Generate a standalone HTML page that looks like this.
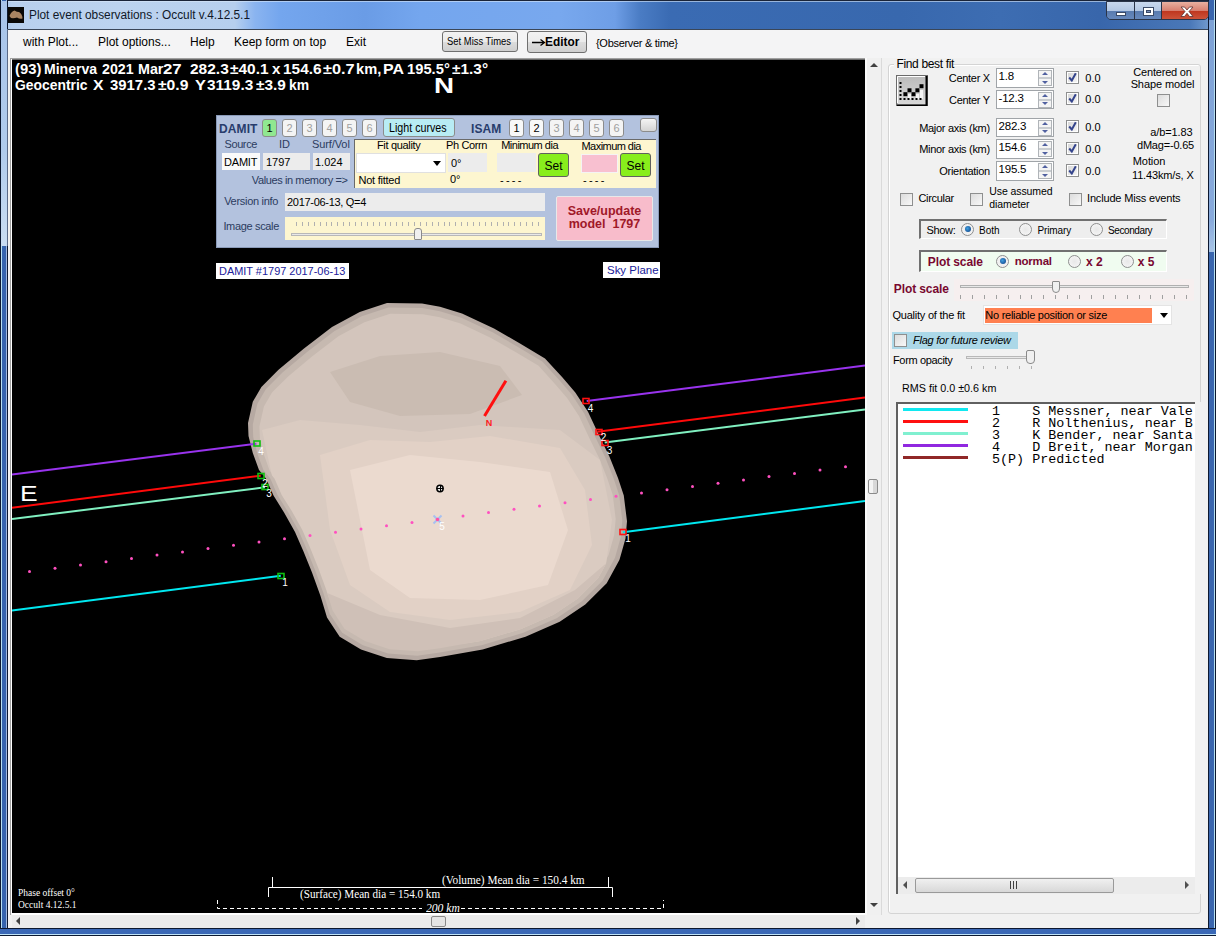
<!DOCTYPE html>
<html><head><meta charset="utf-8"><style>
*{margin:0;padding:0;box-sizing:border-box}
html,body{width:1216px;height:936px;overflow:hidden;background:#f0f0f0;font-family:"Liberation Sans",sans-serif;font-size:11px;color:#000}
.a{position:absolute}
.t{position:absolute;white-space:pre;line-height:1}
svg{position:absolute}

</style></head><body>
<div class="a" style="left:0;top:0;width:1216px;height:30px;background:linear-gradient(90deg,#9fbde6 0px,#b8d0ee 12px,#bcd3ef 120px,#b6cfee 235px,#8ab4f0 255px,#74a6ee 280px,#6a9ce6 365px,#74a6ee 420px,#78a8ee 560px,#6e9ee6 615px,#4a7cc4 640px,#3a6bb3 670px,#3868ae 900px,#3d6db2 1000px,#3866ab 1100px,#4a78b8 1190px,#7fa6d6 1216px)"></div>
<div class="a" style="left:0px;top:0px;width:1216px;height:1px;background:#1a2438"></div>
<div class="a" style="left:8px;top:1px;width:1200px;height:1px;background:#d8e8f8;opacity:.6"></div>
<div class="a" style="left:0;top:0;width:8px;height:936px;background:linear-gradient(90deg,#0c1830 0,#0c1830 1px,#b8e0f0 1px,#b8e0f0 2px,#3664ae 2px,#3664ae 6px,#9fb8e0 6px,#9fb8e0 7px,#0c1830 7px)"></div>
<div class="a" style="left:1px;top:1px;width:6px;height:245px;background:linear-gradient(180deg,#a8c4ea 0,#b0cbec 150px,#c8dcf2 240px)"></div>
<div class="a" style="left:7px;top:29px;width:1px;height:217px;background:#5a6a88"></div>
<div class="a" style="left:1208px;top:0;width:8px;height:936px;background:linear-gradient(90deg,#0c1830 0,#0c1830 1px,#3a66ae 1px,#3a66ae 6px,#b8e0f0 6px,#b8e0f0 7px,#0c1830 7px)"></div>
<div class="a" style="left:1209px;top:20px;width:5px;height:232px;background:linear-gradient(180deg,#7ea2d6 0,#88aadc 200px,#a8c4e6 232px)"></div>
<div class="a" style="left:0;top:928px;width:1216px;height:8px;background:linear-gradient(180deg,#0c1830 0,#0c1830 1px,#3a68b6 1px,#3a68b6 6px,#c0e4f8 6px,#c0e4f8 7px,#0c1830 7px)"></div>
<svg style="left:8px;top:7px" width="16" height="16"><rect width="16" height="16" fill="#0a0806"/><path d="M1.5,9 Q3,4.5 6.5,3.5 Q9,5 11,5 Q14.5,7 14.5,11.5 Q12,12.5 9,10.5 Q6,11.5 3,11 Z" fill="#a88462"/></svg>
<div class="t" style="left:28.61px;top:9.14px;font-size:12px;font-family:'Liberation Sans',sans-serif;transform:scaleX(0.9870);transform-origin:0 0;color:#101828">Plot event observations : Occult v.4.12.5.1</div>
<div class="a" style="left:1106px;top:1px;width:103px;height:19px;border:1px solid #2a3448;border-radius:0 0 5px 5px;overflow:hidden"><div class="a" style="left:0;top:0;width:28px;height:19px;background:linear-gradient(180deg,#c8d8ee 0,#b4c8e4 45%,#5a7cb0 50%,#6a8cc0 100%);border-right:1px solid #2a3448"></div><div class="a" style="left:28px;top:0;width:27px;height:19px;background:linear-gradient(180deg,#c8d8ee 0,#b4c8e4 45%,#5a7cb0 50%,#6a8cc0 100%);border-right:1px solid #2a3448"></div><div class="a" style="left:55px;top:0;width:47px;height:19px;background:linear-gradient(180deg,#e8b0a0 0,#d88070 45%,#c03820 50%,#d05a40 100%)"></div><div class="a" style="left:9px;top:10px;width:10px;height:4px;background:#fff;border:1px solid #3a4a68"></div><div class="a" style="left:36px;top:5px;width:11px;height:9px;border:1px solid #3a4a68;background:#fff"><div class="a" style="left:2px;top:2px;width:5px;height:3px;background:#7a90b8;border:1px solid #3a4a68"></div></div><svg style="left:73px;top:4px" width="14" height="12"><path d="M1,1 L4.5,1 L7,4 L9.5,1 L13,1 L9,5.5 L13,10.5 L9.5,10.5 L7,7.3 L4.5,10.5 L1,10.5 L5,5.5 Z" fill="#fff" stroke="#5a3030" stroke-width="0.8"/></svg></div>
<div class="a" style="left:8px;top:29px;width:1200px;height:899px;background:#f1f1f1"></div>
<div class="a" style="left:8px;top:29px;width:1200px;height:1px;background:#3a4658"></div>
<div class="a" style="left:8px;top:30px;width:1200px;height:28px;background:#f4f4f5"></div>
<div class="t" style="left:23px;top:35.84px;font-size:12px;font-family:'Liberation Sans',sans-serif;color:#000">with Plot...</div>
<div class="t" style="left:98px;top:35.84px;font-size:12px;font-family:'Liberation Sans',sans-serif;color:#000">Plot options...</div>
<div class="t" style="left:190px;top:35.84px;font-size:12px;font-family:'Liberation Sans',sans-serif;color:#000">Help</div>
<div class="t" style="left:234px;top:35.84px;font-size:12px;font-family:'Liberation Sans',sans-serif;color:#000">Keep form on top</div>
<div class="t" style="left:346px;top:35.84px;font-size:12px;font-family:'Liberation Sans',sans-serif;color:#000">Exit</div>
<div class="a" style="left:442px;top:31px;width:76px;height:21px;border:1px solid #707070;border-radius:3px;background:linear-gradient(180deg,#f2f2f2 0,#ebebeb 50%,#dddddd 51%,#cfcfcf 100%)"></div>
<div class="t" style="left:447.32px;top:37.03px;font-size:10px;font-family:'Liberation Sans',sans-serif;transform:scaleX(0.9434);transform-origin:0 0;color:#000">Set Miss Times</div>
<div class="a" style="left:527px;top:31px;width:60px;height:22px;border:1px solid #707070;border-radius:3px;background:linear-gradient(180deg,#f2f2f2 0,#ebebeb 50%,#dddddd 51%,#cfcfcf 100%)"></div>
<svg style="left:532px;top:38px" width="14" height="9"><path d="M0,4.5 L12,4.5 M8.5,1.5 L12.5,4.5 L8.5,7.5" stroke="#000" stroke-width="1.3" fill="none"/></svg>
<div class="t" style="left:545.24px;top:36.42px;font-size:12.5px;font-family:'Liberation Sans',sans-serif;font-weight:bold;transform:scaleX(0.9487);transform-origin:0 0;color:#000">Editor</div>
<div class="t" style="left:596px;top:37.69px;font-size:11px;font-family:'Liberation Sans',sans-serif;letter-spacing:-0.3px;color:#000">{Observer &amp; time}</div>
<div class="a" style="left:10px;top:58px;width:857px;height:1px;background:#a0a0a0"></div>
<div class="a" style="left:10px;top:59px;width:857px;height:1px;background:#696969"></div>
<div class="a" style="left:10px;top:58px;width:1px;height:857px;background:#a0a0a0"></div>
<div class="a" style="left:11px;top:59px;width:1px;height:855px;background:#fff"></div>
<div class="a" style="left:12px;top:60px;width:853px;height:853px;background:#000"></div>
<div class="a" style="left:12px;top:913px;width:853px;height:2px;background:#fff"></div>
<svg style="left:12px;top:60px" width="853" height="853" viewBox="0 0 853 853"><polygon points="375.0,243.0 410.0,243.5 428.0,246.8 450.0,253.5 482.0,268.5 508.0,283.4 533.0,298.4 550.5,317.6 563.3,332.6 576.0,351.8 587.0,375.3 597.5,396.7 606.0,418.0 611.8,435.6 615.0,461.3 613.5,478.4 607.5,499.7 594.7,523.2 573.3,544.6 547.7,561.7 513.5,576.7 470.7,589.5 428.0,597.0 404.7,600.2 374.8,598.0 349.0,589.5 327.7,576.7 315.0,557.4 308.5,536.0 300.0,512.6 291.4,491.2 283.0,472.0 272.2,452.7 261.5,435.6 254.0,418.5 247.0,410.0 240.8,393.0 236.5,376.0 236.0,363.0 240.8,341.8 249.4,326.9 266.5,309.8 292.0,288.4 320.0,267.0 347.7,252.0" fill="#b6a9a2"/><polygon points="376.3,247.5 410.4,248.0 427.9,251.2 449.4,257.7 480.6,272.3 506.0,286.9 530.3,301.5 547.4,320.2 559.9,334.8 572.2,353.6 583.0,376.5 593.2,397.3 601.5,418.1 607.2,435.3 610.3,460.3 608.8,477.0 603.0,497.8 590.5,520.7 569.6,541.5 544.7,558.2 511.3,572.8 469.6,585.3 427.9,592.6 405.2,595.7 376.1,593.6 350.9,585.3 330.2,572.8 317.8,554.0 311.4,533.1 303.1,510.3 294.8,489.5 286.6,470.8 276.0,451.9 265.6,435.3 258.3,418.6 251.5,410.3 245.4,393.7 241.2,377.1 240.8,364.5 245.4,343.8 253.8,329.3 270.5,312.6 295.4,291.7 322.6,270.9 349.7,256.2" fill="#c6b9b0"/><polygon points="378.1,253.7 411.0,254.2 427.9,257.3 448.6,263.6 478.6,277.7 503.1,291.7 526.6,305.8 543.0,323.9 555.1,338.0 567.0,356.0 577.3,378.1 587.2,398.2 595.2,418.2 600.7,434.8 603.7,458.9 602.2,475.0 596.6,495.0 584.6,517.1 564.5,537.2 540.4,553.3 508.2,567.4 468.0,579.5 427.9,586.5 406.0,589.5 377.9,587.4 353.6,579.5 333.6,567.4 321.7,549.3 315.6,529.2 307.6,507.2 299.5,487.0 291.6,469.0 281.4,450.9 271.4,434.8 264.3,418.7 257.7,410.7 251.9,394.7 247.9,378.8 247.4,366.5 251.9,346.6 260.0,332.6 276.1,316.5 300.0,296.4 326.4,276.3 352.4,262.2" fill="#d3c5bc"/><defs><clipPath id="ac"><polygon points="377.6,252.0 410.8,252.4 427.9,255.6 448.8,261.9 479.2,276.2 503.9,290.3 527.6,304.6 544.3,322.8 556.4,337.1 568.5,355.3 579.0,377.6 588.9,398.0 597.0,418.2 602.5,434.9 605.5,459.3 604.1,475.6 598.4,495.8 586.3,518.1 565.9,538.5 541.6,554.7 509.1,569.0 468.5,581.1 427.9,588.2 405.8,591.3 377.4,589.2 352.9,581.1 332.6,569.0 320.6,550.6 314.4,530.3 306.3,508.1 298.1,487.7 290.1,469.5 279.9,451.2 269.7,434.9 262.6,418.7 256.0,410.6 250.1,394.4 246.0,378.3 245.5,365.9 250.1,345.8 258.2,331.7 274.5,315.4 298.7,295.1 325.3,274.8 351.6,260.5"/></clipPath></defs><g clip-path="url(#ac)"><polygon points="250.0,370.0 288.0,360.0 348.0,365.0 408.0,372.0 468.0,365.0 548.0,370.0 588.0,400.0 600.0,460.0 592.0,520.0 558.0,555.0 488.0,580.0 408.0,588.0 348.0,575.0 318.0,540.0 288.0,480.0 263.0,430.0" fill="#dacbc1"/><polygon points="308.0,530.0 368.0,555.0 438.0,568.0 508.0,558.0 563.0,530.0 598.0,500.0 628.0,540.0 548.0,620.0 408.0,640.0 288.0,590.0" fill="#cfc0b7"/><polygon points="318.0,312.0 368.0,296.0 428.0,292.0 488.0,306.0 510.0,335.0 458.0,354.0 388.0,356.0 338.0,342.0" fill="#cabcb2"/><polygon points="308.0,395.0 358.0,380.0 418.0,382.0 478.0,376.0 548.0,388.0 573.0,430.0 580.0,485.0 558.0,530.0 508.0,552.0 438.0,560.0 378.0,552.0 338.0,525.0 318.0,470.0" fill="#e2d1c6"/><polygon points="338.0,410.0 398.0,395.0 468.0,402.0 538.0,412.0 556.0,470.0 536.0,525.0 468.0,540.0 398.0,538.0 358.0,510.0" fill="#ebdacf"/></g><line x1="0" y1="414.5" x2="244.39999999999998" y2="383.7" stroke="#9933ee" stroke-width="2"/><line x1="574.7" y1="341" x2="853" y2="305.5" stroke="#9933ee" stroke-width="2"/><line x1="0" y1="447.8" x2="248.7" y2="415.7" stroke="#ff0a0a" stroke-width="2"/><line x1="585.4" y1="371.8" x2="853" y2="337.6" stroke="#ff0a0a" stroke-width="2"/><line x1="0" y1="459" x2="253" y2="427.3" stroke="#80f0c0" stroke-width="2"/><line x1="592.7" y1="382.5" x2="853" y2="349.5" stroke="#80f0c0" stroke-width="2"/><line x1="0" y1="550.4" x2="268.8" y2="515.7" stroke="#00e8f0" stroke-width="2"/><line x1="611" y1="472.20000000000005" x2="853" y2="441" stroke="#00e8f0" stroke-width="2"/><circle cx="17.5" cy="511.5" r="1.5" fill="#ff50c0"/><circle cx="43.0" cy="508.2" r="1.5" fill="#ff50c0"/><circle cx="68.5" cy="505.0" r="1.5" fill="#ff50c0"/><circle cx="94.0" cy="501.7" r="1.5" fill="#ff50c0"/><circle cx="119.5" cy="498.4" r="1.5" fill="#ff50c0"/><circle cx="145.0" cy="495.1" r="1.5" fill="#ff50c0"/><circle cx="170.5" cy="491.9" r="1.5" fill="#ff50c0"/><circle cx="196.0" cy="488.6" r="1.5" fill="#ff50c0"/><circle cx="221.5" cy="485.3" r="1.5" fill="#ff50c0"/><circle cx="247.0" cy="482.1" r="1.5" fill="#ff50c0"/><circle cx="272.5" cy="478.8" r="1.5" fill="#ff50c0"/><circle cx="298.0" cy="475.5" r="1.5" fill="#ff50c0"/><circle cx="323.5" cy="472.2" r="1.5" fill="#ff50c0"/><circle cx="349.0" cy="469.0" r="1.5" fill="#ff50c0"/><circle cx="374.5" cy="465.7" r="1.5" fill="#ff50c0"/><circle cx="400.0" cy="462.4" r="1.5" fill="#ff50c0"/><circle cx="425.5" cy="459.2" r="1.5" fill="#ff50c0"/><circle cx="451.0" cy="455.9" r="1.5" fill="#ff50c0"/><circle cx="476.5" cy="452.6" r="1.5" fill="#ff50c0"/><circle cx="502.0" cy="449.3" r="1.5" fill="#ff50c0"/><circle cx="527.5" cy="446.1" r="1.5" fill="#ff50c0"/><circle cx="553.0" cy="442.8" r="1.5" fill="#ff50c0"/><circle cx="578.5" cy="439.5" r="1.5" fill="#ff50c0"/><circle cx="604.0" cy="436.3" r="1.5" fill="#ff50c0"/><circle cx="629.5" cy="433.0" r="1.5" fill="#ff50c0"/><circle cx="655.0" cy="429.7" r="1.5" fill="#ff50c0"/><circle cx="680.5" cy="426.4" r="1.5" fill="#ff50c0"/><circle cx="706.0" cy="423.2" r="1.5" fill="#ff50c0"/><circle cx="731.5" cy="419.9" r="1.5" fill="#ff50c0"/><circle cx="757.0" cy="416.6" r="1.5" fill="#ff50c0"/><circle cx="782.5" cy="413.4" r="1.5" fill="#ff50c0"/><circle cx="808.0" cy="410.1" r="1.5" fill="#ff50c0"/><circle cx="833.5" cy="406.8" r="1.5" fill="#ff50c0"/><rect x="242" y="381.0" width="6" height="5" fill="none" stroke="#10c010" stroke-width="1.6"/><rect x="246" y="413.5" width="6" height="5" fill="none" stroke="#10c010" stroke-width="1.6"/><rect x="250" y="424.5" width="6" height="5" fill="none" stroke="#10c010" stroke-width="1.6"/><rect x="266" y="513.5" width="6" height="5" fill="none" stroke="#10c010" stroke-width="1.6"/><rect x="571" y="338.5" width="6" height="5" fill="none" stroke="#ff1010" stroke-width="1.6"/><rect x="584" y="369.5" width="6" height="5" fill="none" stroke="#ff1010" stroke-width="1.6"/><rect x="590" y="380.5" width="6" height="5" fill="none" stroke="#ff1010" stroke-width="1.6"/><rect x="608" y="469.5" width="6" height="5" fill="none" stroke="#ff1010" stroke-width="1.6"/><line x1="493.9" y1="320.8" x2="472.5" y2="356" stroke="#ff1010" stroke-width="3"/><circle cx="428" cy="428.5" r="3.2" fill="#fff" stroke="#000" stroke-width="1.4"/><line x1="424.5" y1="428.5" x2="431.5" y2="428.5" stroke="#000" stroke-width="1.2"/><line x1="428.5" y1="425" x2="428.5" y2="432" stroke="#000" stroke-width="1"/><path d="M421.5,455.5 L429.5,463.5 M429.5,455.5 L421.5,463.5" stroke="#a8c0f0" stroke-width="2"/><circle cx="425.5" cy="459.5" r="1.8" fill="#ff50a8"/><polyline points="260.5,817 260.5,827.5 596.5,827.5 596.5,817" fill="none" stroke="#ffffff" stroke-width="1"/><polyline points="256.5,837 256.5,827.5 600.5,827.5 600.5,837" fill="none" stroke="#ffffff" stroke-width="1"/><polyline points="205.5,840 205.5,848.5 410,848.5" fill="none" stroke="#ffffff" stroke-width="1" stroke-dasharray="4,3"/><polyline points="449,848.5 651.5,848.5 651.5,840" fill="none" stroke="#ffffff" stroke-width="1" stroke-dasharray="4,3"/></svg>
<div class="t" style="left:15.26px;top:62.15px;font-size:14px;font-family:'Liberation Sans',sans-serif;font-weight:bold;transform:scaleX(1.0593);transform-origin:0 0;color:#fff">(93)</div>
<div class="t" style="left:43.60px;top:62.15px;font-size:14px;font-family:'Liberation Sans',sans-serif;font-weight:bold;transform:scaleX(1.0038);transform-origin:0 0;color:#fff">Minerva</div>
<div class="t" style="left:102.39px;top:62.15px;font-size:14px;font-family:'Liberation Sans',sans-serif;font-weight:bold;transform:scaleX(1.0164);transform-origin:0 0;color:#fff">2021</div>
<div class="t" style="left:138.08px;top:62.15px;font-size:14px;font-family:'Liberation Sans',sans-serif;font-weight:bold;transform:scaleX(1.0210);transform-origin:0 0;color:#fff">Mar</div>
<div class="t" style="left:163.02px;top:62.15px;font-size:14px;font-family:'Liberation Sans',sans-serif;font-weight:bold;transform:scaleX(1.1986);transform-origin:0 0;color:#fff">27</div>
<div class="t" style="left:190.36px;top:62.15px;font-size:14px;font-family:'Liberation Sans',sans-serif;font-weight:bold;transform:scaleX(1.1056);transform-origin:0 0;color:#fff">282.3</div>
<div class="t" style="left:230.27px;top:62.15px;font-size:14px;font-family:'Liberation Sans',sans-serif;font-weight:bold;transform:scaleX(1.1023);transform-origin:0 0;color:#fff">±40.1</div>
<div class="t" style="left:271.69px;top:62.15px;font-size:14px;font-family:'Liberation Sans',sans-serif;font-weight:bold;transform:scaleX(1.0789);transform-origin:0 0;color:#fff">x</div>
<div class="t" style="left:282.82px;top:62.15px;font-size:14px;font-family:'Liberation Sans',sans-serif;font-weight:bold;transform:scaleX(1.1009);transform-origin:0 0;color:#fff">154.6</div>
<div class="t" style="left:322.65px;top:62.15px;font-size:14px;font-family:'Liberation Sans',sans-serif;font-weight:bold;transform:scaleX(1.1635);transform-origin:0 0;color:#fff">±0.7</div>
<div class="t" style="left:355.66px;top:62.15px;font-size:14px;font-family:'Liberation Sans',sans-serif;font-weight:bold;transform:scaleX(1.0493);transform-origin:0 0;color:#fff">km,</div>
<div class="t" style="left:383.27px;top:62.15px;font-size:14px;font-family:'Liberation Sans',sans-serif;font-weight:bold;transform:scaleX(1.1395);transform-origin:0 0;color:#fff">PA</div>
<div class="t" style="left:407.16px;top:62.15px;font-size:14px;font-family:'Liberation Sans',sans-serif;font-weight:bold;transform:scaleX(1.0536);transform-origin:0 0;color:#fff">195.5°</div>
<div class="t" style="left:452.47px;top:62.15px;font-size:14px;font-family:'Liberation Sans',sans-serif;font-weight:bold;transform:scaleX(1.1006);transform-origin:0 0;color:#fff">±1.3°</div>
<div class="t" style="left:15.40px;top:78.15px;font-size:14px;font-family:'Liberation Sans',sans-serif;font-weight:bold;transform:scaleX(0.9917);transform-origin:0 0;color:#fff">Geocentric</div>
<div class="t" style="left:93.49px;top:78.15px;font-size:14px;font-family:'Liberation Sans',sans-serif;font-weight:bold;transform:scaleX(1.1304);transform-origin:0 0;color:#fff">X</div>
<div class="t" style="left:109.68px;top:78.15px;font-size:14px;font-family:'Liberation Sans',sans-serif;font-weight:bold;transform:scaleX(1.0643);transform-origin:0 0;color:#fff">3917.3</div>
<div class="t" style="left:157.66px;top:78.15px;font-size:14px;font-family:'Liberation Sans',sans-serif;font-weight:bold;transform:scaleX(1.1212);transform-origin:0 0;color:#fff">±0.9</div>
<div class="t" style="left:194.67px;top:78.15px;font-size:14px;font-family:'Liberation Sans',sans-serif;font-weight:bold;transform:scaleX(1.1667);transform-origin:0 0;color:#fff">Y</div>
<div class="t" style="left:207.07px;top:78.15px;font-size:14px;font-family:'Liberation Sans',sans-serif;font-weight:bold;transform:scaleX(1.0993);transform-origin:0 0;color:#fff">3119.3</div>
<div class="t" style="left:255.67px;top:78.15px;font-size:14px;font-family:'Liberation Sans',sans-serif;font-weight:bold;transform:scaleX(1.0985);transform-origin:0 0;color:#fff">±3.9</div>
<div class="t" style="left:288.70px;top:78.15px;font-size:14px;font-family:'Liberation Sans',sans-serif;font-weight:bold;transform:scaleX(0.9946);transform-origin:0 0;color:#fff">km</div>
<div class="t" style="left:434.24px;top:75.38px;font-size:22px;font-family:'Liberation Sans',sans-serif;font-weight:bold;transform:scaleX(1.2595);transform-origin:0 0;color:#fff">N</div>
<div class="t" style="left:19.84px;top:483.38px;font-size:22px;font-family:'Liberation Sans',sans-serif;transform:scaleX(1.2000);transform-origin:0 0;color:#fff">E</div>
<div class="t" style="left:189px;width:600px;text-align:center;top:419.38px;font-size:9px;font-family:'Liberation Sans',sans-serif;color:#ff2020;font-weight:bold">N</div>
<div class="t" style="left:290.5px;width:600px;text-align:center;top:403.54px;font-size:10px;font-family:'Liberation Sans',sans-serif;color:#fff">4</div>
<div class="t" style="left:303.5px;width:600px;text-align:center;top:432.54px;font-size:10px;font-family:'Liberation Sans',sans-serif;color:#fff">2</div>
<div class="t" style="left:309.5px;width:600px;text-align:center;top:445.54px;font-size:10px;font-family:'Liberation Sans',sans-serif;color:#fff">3</div>
<div class="t" style="left:328px;width:600px;text-align:center;top:533.53px;font-size:10px;font-family:'Liberation Sans',sans-serif;color:#fff">1</div>
<div class="t" style="left:-39px;width:600px;text-align:center;top:446.54px;font-size:10px;font-family:'Liberation Sans',sans-serif;color:#fff">4</div>
<div class="t" style="left:-35px;width:600px;text-align:center;top:478.54px;font-size:10px;font-family:'Liberation Sans',sans-serif;color:#fff">2</div>
<div class="t" style="left:-31px;width:600px;text-align:center;top:488.54px;font-size:10px;font-family:'Liberation Sans',sans-serif;color:#fff">3</div>
<div class="t" style="left:-15px;width:600px;text-align:center;top:577.53px;font-size:10px;font-family:'Liberation Sans',sans-serif;color:#fff">1</div>
<div class="t" style="left:142px;width:600px;text-align:center;top:521.53px;font-size:10px;font-family:'Liberation Sans',sans-serif;color:#fff">5</div>
<div class="t" style="left:441.51px;top:875.38px;font-size:11.5px;font-family:'Liberation Serif',serif;transform:scaleX(0.9847);transform-origin:0 0;color:#fff">(Volume) Mean dia = 150.4 km</div>
<div class="t" style="left:299.51px;top:888.88px;font-size:11.5px;font-family:'Liberation Serif',serif;transform:scaleX(0.9701);transform-origin:0 0;color:#fff">(Surface) Mean dia = 154.0 km</div>
<div class="t" style="left:426.40px;top:901.96px;font-size:12px;font-family:'Liberation Serif',serif;font-style:italic;transform:scaleX(0.9681);transform-origin:0 0;color:#fff">200 km</div>
<div class="t" style="left:18px;top:889.05px;font-size:9.5px;font-family:'Liberation Serif',serif;color:#fff">Phase offset 0°</div>
<div class="t" style="left:18px;top:901.05px;font-size:9.5px;font-family:'Liberation Serif',serif;color:#fff">Occult 4.12.5.1</div>
<div class="a" style="left:216px;top:115px;width:443px;height:133px;background:#b3c2de;border:1px solid #8a9ab8"></div>
<div class="t" style="left:219px;top:122.84px;font-size:12px;font-family:'Liberation Sans',sans-serif;letter-spacing:0.1px;color:#283c6c;font-weight:bold">DAMIT</div>
<div class="a" style="left:262px;top:118.5px;width:15px;height:18px;border:1px solid #8c8c8c;border-radius:3px;background:#90e890"></div>
<div class="t" style="left:-30.5px;width:600px;text-align:center;top:123.19px;font-size:11px;font-family:'Liberation Sans',sans-serif;color:#000">1</div>
<div class="a" style="left:282px;top:118.5px;width:15px;height:18px;border:1px solid #8c8c8c;border-radius:3px;background:#f4f4f4"></div>
<div class="t" style="left:-10.5px;width:600px;text-align:center;top:123.19px;font-size:11px;font-family:'Liberation Sans',sans-serif;color:#a0a0a0">2</div>
<div class="a" style="left:302px;top:118.5px;width:15px;height:18px;border:1px solid #8c8c8c;border-radius:3px;background:#f4f4f4"></div>
<div class="t" style="left:9.5px;width:600px;text-align:center;top:123.19px;font-size:11px;font-family:'Liberation Sans',sans-serif;color:#a0a0a0">3</div>
<div class="a" style="left:322px;top:118.5px;width:15px;height:18px;border:1px solid #8c8c8c;border-radius:3px;background:#f4f4f4"></div>
<div class="t" style="left:29.5px;width:600px;text-align:center;top:123.19px;font-size:11px;font-family:'Liberation Sans',sans-serif;color:#a0a0a0">4</div>
<div class="a" style="left:342px;top:118.5px;width:15px;height:18px;border:1px solid #8c8c8c;border-radius:3px;background:#f4f4f4"></div>
<div class="t" style="left:49.5px;width:600px;text-align:center;top:123.19px;font-size:11px;font-family:'Liberation Sans',sans-serif;color:#a0a0a0">5</div>
<div class="a" style="left:362px;top:118.5px;width:15px;height:18px;border:1px solid #8c8c8c;border-radius:3px;background:#f4f4f4"></div>
<div class="t" style="left:69.5px;width:600px;text-align:center;top:123.19px;font-size:11px;font-family:'Liberation Sans',sans-serif;color:#a0a0a0">6</div>
<div class="a" style="left:383px;top:118px;width:72px;height:19px;border:1px solid #8c8c8c;border-radius:3px;background:#b8ecf4"></div>
<div class="t" style="left:388.70px;top:122.34px;font-size:12px;font-family:'Liberation Sans',sans-serif;transform:scaleX(0.8912);transform-origin:0 0;color:#000">Light curves</div>
<div class="t" style="left:471px;top:122.84px;font-size:12px;font-family:'Liberation Sans',sans-serif;letter-spacing:0.1px;color:#283c6c;font-weight:bold">ISAM</div>
<div class="a" style="left:509px;top:118.5px;width:15px;height:18px;border:1px solid #8c8c8c;border-radius:3px;background:#f8f8f8"></div>
<div class="t" style="left:216.5px;width:600px;text-align:center;top:123.19px;font-size:11px;font-family:'Liberation Sans',sans-serif;color:#000">1</div>
<div class="a" style="left:529px;top:118.5px;width:15px;height:18px;border:1px solid #8c8c8c;border-radius:3px;background:#f8f8f8"></div>
<div class="t" style="left:236.5px;width:600px;text-align:center;top:123.19px;font-size:11px;font-family:'Liberation Sans',sans-serif;color:#000">2</div>
<div class="a" style="left:549px;top:118.5px;width:15px;height:18px;border:1px solid #8c8c8c;border-radius:3px;background:#f4f4f4"></div>
<div class="t" style="left:256.5px;width:600px;text-align:center;top:123.19px;font-size:11px;font-family:'Liberation Sans',sans-serif;color:#a0a0a0">3</div>
<div class="a" style="left:569px;top:118.5px;width:15px;height:18px;border:1px solid #8c8c8c;border-radius:3px;background:#f4f4f4"></div>
<div class="t" style="left:276.5px;width:600px;text-align:center;top:123.19px;font-size:11px;font-family:'Liberation Sans',sans-serif;color:#a0a0a0">4</div>
<div class="a" style="left:589px;top:118.5px;width:15px;height:18px;border:1px solid #8c8c8c;border-radius:3px;background:#f4f4f4"></div>
<div class="t" style="left:296.5px;width:600px;text-align:center;top:123.19px;font-size:11px;font-family:'Liberation Sans',sans-serif;color:#a0a0a0">5</div>
<div class="a" style="left:609px;top:118.5px;width:15px;height:18px;border:1px solid #8c8c8c;border-radius:3px;background:#f4f4f4"></div>
<div class="t" style="left:316.5px;width:600px;text-align:center;top:123.19px;font-size:11px;font-family:'Liberation Sans',sans-serif;color:#a0a0a0">6</div>
<div class="a" style="left:640px;top:118px;width:17px;height:14px;border:1px solid #8c8c8c;border-radius:3px;background:linear-gradient(180deg,#f4f4f4,#d4d4d4)"></div>
<div class="t" style="left:224.5px;top:138.69px;font-size:11px;font-family:'Liberation Sans',sans-serif;letter-spacing:-0.4px;color:#2c3c60">Source</div>
<div class="t" style="left:279px;top:138.69px;font-size:11px;font-family:'Liberation Sans',sans-serif;color:#2c3c60">ID</div>
<div class="t" style="left:312px;top:138.69px;font-size:11px;font-family:'Liberation Sans',sans-serif;letter-spacing:-0.1px;color:#2c3c60">Surf/Vol</div>
<div class="a" style="left:221.5px;top:153px;width:38px;height:17px;background:#fafafa"></div>
<div class="a" style="left:262.5px;top:153px;width:47px;height:17px;background:#ececec"></div>
<div class="a" style="left:312.5px;top:153px;width:37px;height:17px;background:#ececec"></div>
<div class="t" style="left:224px;top:156.69px;font-size:11px;font-family:'Liberation Sans',sans-serif;letter-spacing:-0.2px;color:#000">DAMIT</div>
<div class="t" style="left:266px;top:156.69px;font-size:11px;font-family:'Liberation Sans',sans-serif;color:#000">1797</div>
<div class="t" style="left:315px;top:156.69px;font-size:11px;font-family:'Liberation Sans',sans-serif;color:#000">1.024</div>
<div class="t" style="right:868.5px;text-align:right;top:174.69px;font-size:11px;font-family:'Liberation Sans',sans-serif;letter-spacing:-0.39px;color:#2c3c60">Values in memory =&gt;</div>
<div class="a" style="left:354px;top:139px;width:302px;height:49px;background:#fdf6d0;border-left:1px solid #6a6a6a;border-top:1px solid #6a6a6a"></div>
<div class="t" style="left:98.69999999999999px;width:600px;text-align:center;top:140.19px;font-size:11px;font-family:'Liberation Sans',sans-serif;letter-spacing:-0.33px;color:#000">Fit quality</div>
<div class="t" style="left:166.5px;width:600px;text-align:center;top:140.19px;font-size:11px;font-family:'Liberation Sans',sans-serif;letter-spacing:-0.4px;color:#000">Ph Corrn</div>
<div class="t" style="left:229.60000000000002px;width:600px;text-align:center;top:140.19px;font-size:11px;font-family:'Liberation Sans',sans-serif;letter-spacing:-0.5px;color:#000">Minimum dia</div>
<div class="t" style="left:311.20000000000005px;width:600px;text-align:center;top:140.69px;font-size:11px;font-family:'Liberation Sans',sans-serif;letter-spacing:-0.55px;color:#000">Maximum dia</div>
<div class="a" style="left:356px;top:153px;width:89.5px;height:20px;background:#fff;border:1px solid #e0e0e0"></div>
<div class="a" style="left:433px;top:161px;width:0;height:0;border-left:4px solid transparent;border-right:4px solid transparent;border-top:5px solid #000"></div>
<div class="a" style="left:448px;top:153px;width:39px;height:19px;background:#ececec"></div>
<div class="t" style="left:451px;top:157.69px;font-size:11px;font-family:'Liberation Sans',sans-serif;color:#000">0°</div>
<div class="a" style="left:497px;top:153px;width:39px;height:19px;background:#ececec"></div>
<div class="a" style="left:538px;top:153px;width:31px;height:24px;border:1px solid #606060;border-radius:3px;background:#88ee1c"></div>
<div class="t" style="left:253.5px;width:600px;text-align:center;top:159.84px;font-size:12px;font-family:'Liberation Sans',sans-serif;color:#000">Set</div>
<div class="a" style="left:581px;top:153.5px;width:37px;height:19px;background:#f8c0d0;border:1px solid #f4f4f4"></div>
<div class="a" style="left:620px;top:153px;width:31px;height:24px;border:1px solid #606060;border-radius:3px;background:#88ee1c"></div>
<div class="t" style="left:335.5px;width:600px;text-align:center;top:159.84px;font-size:12px;font-family:'Liberation Sans',sans-serif;color:#000">Set</div>
<div class="t" style="left:358.5px;top:175.19px;font-size:11px;font-family:'Liberation Sans',sans-serif;letter-spacing:-0.25px;color:#000">Not fitted</div>
<div class="t" style="left:450px;top:173.69px;font-size:11px;font-family:'Liberation Sans',sans-serif;color:#000">0°</div>
<div class="t" style="left:500px;top:174.69px;font-size:11px;font-family:'Liberation Sans',sans-serif;letter-spacing:-0.4px;color:#000">- - - -</div>
<div class="t" style="left:583px;top:174.69px;font-size:11px;font-family:'Liberation Sans',sans-serif;letter-spacing:-0.4px;color:#000">- - - -</div>
<div class="t" style="left:224.2px;top:195.69px;font-size:11px;font-family:'Liberation Sans',sans-serif;letter-spacing:-0.3px;color:#2c3c60">Version info</div>
<div class="a" style="left:284.5px;top:193px;width:260px;height:17.5px;background:#ececec"></div>
<div class="t" style="left:287px;top:196.69px;font-size:11px;font-family:'Liberation Sans',sans-serif;letter-spacing:-0.3px;color:#000">2017-06-13, Q=4</div>
<div class="t" style="left:223.4px;top:220.69px;font-size:11px;font-family:'Liberation Sans',sans-serif;letter-spacing:-0.34px;color:#2c3c60">Image scale</div>
<div class="a" style="left:285px;top:216.5px;width:260px;height:23px;background:#fdf6d0"></div>
<div class="a" style="left:296px;top:222px;width:250px;height:5px"><div class="a" style="left:0.0px;top:0;width:1px;height:4px;background:#b0b0b0"></div><div class="a" style="left:5.9px;top:0;width:1px;height:4px;background:#b0b0b0"></div><div class="a" style="left:11.8px;top:0;width:1px;height:4px;background:#b0b0b0"></div><div class="a" style="left:17.700000000000003px;top:0;width:1px;height:4px;background:#b0b0b0"></div><div class="a" style="left:23.6px;top:0;width:1px;height:4px;background:#b0b0b0"></div><div class="a" style="left:29.5px;top:0;width:1px;height:4px;background:#b0b0b0"></div><div class="a" style="left:35.400000000000006px;top:0;width:1px;height:4px;background:#b0b0b0"></div><div class="a" style="left:41.300000000000004px;top:0;width:1px;height:4px;background:#b0b0b0"></div><div class="a" style="left:47.2px;top:0;width:1px;height:4px;background:#b0b0b0"></div><div class="a" style="left:53.1px;top:0;width:1px;height:4px;background:#b0b0b0"></div><div class="a" style="left:59.0px;top:0;width:1px;height:4px;background:#b0b0b0"></div><div class="a" style="left:64.9px;top:0;width:1px;height:4px;background:#b0b0b0"></div><div class="a" style="left:70.80000000000001px;top:0;width:1px;height:4px;background:#b0b0b0"></div><div class="a" style="left:76.7px;top:0;width:1px;height:4px;background:#b0b0b0"></div><div class="a" style="left:82.60000000000001px;top:0;width:1px;height:4px;background:#b0b0b0"></div><div class="a" style="left:88.5px;top:0;width:1px;height:4px;background:#b0b0b0"></div><div class="a" style="left:94.4px;top:0;width:1px;height:4px;background:#b0b0b0"></div><div class="a" style="left:100.30000000000001px;top:0;width:1px;height:4px;background:#b0b0b0"></div><div class="a" style="left:106.2px;top:0;width:1px;height:4px;background:#b0b0b0"></div><div class="a" style="left:112.10000000000001px;top:0;width:1px;height:4px;background:#b0b0b0"></div><div class="a" style="left:118.0px;top:0;width:1px;height:4px;background:#b0b0b0"></div><div class="a" style="left:123.9px;top:0;width:1px;height:4px;background:#b0b0b0"></div><div class="a" style="left:129.8px;top:0;width:1px;height:4px;background:#b0b0b0"></div><div class="a" style="left:135.70000000000002px;top:0;width:1px;height:4px;background:#b0b0b0"></div><div class="a" style="left:141.60000000000002px;top:0;width:1px;height:4px;background:#b0b0b0"></div><div class="a" style="left:147.5px;top:0;width:1px;height:4px;background:#b0b0b0"></div><div class="a" style="left:153.4px;top:0;width:1px;height:4px;background:#b0b0b0"></div><div class="a" style="left:159.3px;top:0;width:1px;height:4px;background:#b0b0b0"></div><div class="a" style="left:165.20000000000002px;top:0;width:1px;height:4px;background:#b0b0b0"></div><div class="a" style="left:171.10000000000002px;top:0;width:1px;height:4px;background:#b0b0b0"></div><div class="a" style="left:177.0px;top:0;width:1px;height:4px;background:#b0b0b0"></div><div class="a" style="left:182.9px;top:0;width:1px;height:4px;background:#b0b0b0"></div><div class="a" style="left:188.8px;top:0;width:1px;height:4px;background:#b0b0b0"></div><div class="a" style="left:194.70000000000002px;top:0;width:1px;height:4px;background:#b0b0b0"></div><div class="a" style="left:200.60000000000002px;top:0;width:1px;height:4px;background:#b0b0b0"></div><div class="a" style="left:206.5px;top:0;width:1px;height:4px;background:#b0b0b0"></div><div class="a" style="left:212.4px;top:0;width:1px;height:4px;background:#b0b0b0"></div><div class="a" style="left:218.3px;top:0;width:1px;height:4px;background:#b0b0b0"></div><div class="a" style="left:224.20000000000002px;top:0;width:1px;height:4px;background:#b0b0b0"></div><div class="a" style="left:230.10000000000002px;top:0;width:1px;height:4px;background:#b0b0b0"></div><div class="a" style="left:236.0px;top:0;width:1px;height:4px;background:#b0b0b0"></div><div class="a" style="left:241.9px;top:0;width:1px;height:4px;background:#b0b0b0"></div></div>
<div class="a" style="left:291px;top:233px;width:251px;height:3px;background:#e8e8e8;border:1px solid #b8b8b8"></div>
<div class="a" style="left:414px;top:228px;width:8px;height:12px;border:1px solid #8a8a8a;border-radius:3px 3px 1px 1px;background:#f0f0f0"></div>
<div class="a" style="left:556px;top:196px;width:97px;height:45px;border:1px solid #e8e8e8;border-radius:2px;background:#f8bccb"></div>
<div class="t" style="left:304.5px;width:600px;text-align:center;top:205.42px;font-size:12.5px;font-family:'Liberation Sans',sans-serif;color:#a01828;font-weight:bold">Save/update</div>
<div class="t" style="left:304.5px;width:600px;text-align:center;top:218.42px;font-size:12.5px;font-family:'Liberation Sans',sans-serif;color:#a01828;font-weight:bold">model  1797</div>
<div class="a" style="left:216px;top:263px;width:133px;height:16px;background:#fff"></div>
<div class="t" style="left:219.14px;top:266.27px;font-size:11.5px;font-family:'Liberation Sans',sans-serif;transform:scaleX(0.9513);transform-origin:0 0;color:#20209a">DAMIT #1797 2017-06-13</div>
<div class="a" style="left:603px;top:262px;width:57px;height:16px;background:#fff"></div>
<div class="t" style="left:606.90px;top:265.27px;font-size:11.5px;font-family:'Liberation Sans',sans-serif;transform:scaleX(0.9961);transform-origin:0 0;color:#20209a">Sky Plane</div>
<div class="a" style="left:865px;top:58px;width:17px;height:857px;background:#f0f0f0;border-left:2px solid #fafafa;border-right:1px solid #dadada"></div>
<div class="a" style="left:870px;top:63px;width:0;height:0;border-left:4px solid transparent;border-right:4px solid transparent;border-bottom:4px solid #404040"></div>
<div class="a" style="left:870px;top:903px;width:0;height:0;border-left:4px solid transparent;border-right:4px solid transparent;border-top:4px solid #404040"></div>
<div class="a" style="left:868px;top:479px;width:10px;height:15px;border:1px solid #8a8a8a;border-radius:2px;background:linear-gradient(90deg,#f4f4f4 0,#f4f4f4 50%,#d8d8d8 50%)"></div>
<div class="a" style="left:12px;top:915px;width:853px;height:13px;background:#ebebeb"></div>
<div class="a" style="left:16px;top:917px;width:0;height:0;border-top:4px solid transparent;border-bottom:4px solid transparent;border-right:4px solid #404040"></div>
<div class="a" style="left:856px;top:917px;width:0;height:0;border-top:4px solid transparent;border-bottom:4px solid transparent;border-left:4px solid #404040"></div>
<div class="a" style="left:431px;top:916px;width:15px;height:11px;border:1px solid #8a8a8a;border-radius:2px;background:#e4e4e4"></div>
<div class="a" style="left:887.5px;top:64px;width:313px;height:850px;border:1px solid #d4d4d4;border-radius:3px;box-shadow:inset 1px 1px 0 #fff"></div>
<div class="a" style="left:894px;top:58px;width:58px;height:12px;background:#f1f1f1"></div>
<div class="t" style="left:896.5px;top:57.84px;font-size:12px;font-family:'Liberation Sans',sans-serif;letter-spacing:-0.35px;color:#000">Find best fit</div>
<svg style="left:896px;top:75px" width="32" height="31"><rect x="0.5" y="0.5" width="31" height="30" fill="#b4b4b4" stroke="#6a6a6a"/><defs><linearGradient id="ig" x1="0" y1="0" x2="0" y2="1"><stop offset="0" stop-color="#bcbcbc"/><stop offset="1" stop-color="#d8d8d8"/></linearGradient></defs><rect x="2" y="2" width="28" height="27" fill="url(#ig)"/><path d="M1.5,28 V1.5 H29" stroke="#fff" stroke-width="1" fill="none"/><path d="M30.5,1 V30.5 H1" stroke="#000" stroke-width="2" fill="none"/><rect x="12.0" y="19" width="3" height="5" fill="#f4f4f4"/><rect x="20.0" y="19" width="3" height="5" fill="#f4f4f4"/><rect x="24.0" y="15" width="3" height="9" fill="#f4f4f4"/><rect x="3.5" y="7" width="2" height="2" fill="#000"/><rect x="3.5" y="11" width="2" height="2" fill="#000"/><rect x="3.5" y="15" width="2" height="2" fill="#000"/><rect x="3.5" y="19" width="2" height="2" fill="#000"/><rect x="3.5" y="23" width="2" height="2" fill="#000"/><rect x="7.5" y="23" width="2" height="2" fill="#000"/><rect x="11.5" y="23" width="2" height="2" fill="#000"/><rect x="15.5" y="23" width="2" height="2" fill="#000"/><rect x="19.5" y="23" width="2" height="2" fill="#000"/><rect x="23.5" y="23" width="2" height="2" fill="#000"/><rect x="7.4" y="17.2" width="4" height="4" fill="#000"/><rect x="11.5" y="13.3" width="4" height="4" fill="#000"/><rect x="15.5" y="17.2" width="4" height="4" fill="#000"/><rect x="19.4" y="13.3" width="4" height="4" fill="#000"/><rect x="23.5" y="9.2" width="4" height="4" fill="#000"/></svg>
<div class="t" style="right:226.20000000000005px;text-align:right;top:73.19px;font-size:11px;font-family:'Liberation Sans',sans-serif;letter-spacing:-0.3px;color:#000">Center X</div>
<div class="a" style="left:996px;top:68.0px;width:58px;height:19.5px;border:1px solid #a0a4a8;background:#fff"></div>
<div class="t" style="left:998.5px;top:71.07px;font-size:11.5px;font-family:'Liberation Sans',sans-serif;letter-spacing:-0.2px;color:#000">1.8</div>
<div class="a" style="left:1038px;top:70.0px;width:14px;height:16px;border:1px solid #b0b4b8;background:#f4f4f4"></div>
<div class="a" style="left:1039px;top:77.0px;width:12px;height:2px;background:#c8ccd0"></div>
<div class="a" style="left:1041.5px;top:72.0px;width:0;height:0;border-left:3.5px solid transparent;border-right:3.5px solid transparent;border-bottom:3.5px solid #5060a0"></div>
<div class="a" style="left:1041.5px;top:80.5px;width:0;height:0;border-left:3.5px solid transparent;border-right:3.5px solid transparent;border-top:3.5px solid #5060a0"></div>
<div class="a" style="left:1066px;top:71px;width:13px;height:13px;border:1px solid #8e8f8f;box-shadow:inset 0 0 0 1px #fff;background:linear-gradient(135deg,#d4d4d4,#f8f8f8)"></div>
<svg style="left:1066px;top:71px" width="13" height="13"><path d="M3.2,6.5 L5.8,9.5 L9.8,2.3" stroke="#34448c" stroke-width="2" fill="none"/></svg>
<div class="t" style="left:1085.3px;top:72.69px;font-size:11px;font-family:'Liberation Sans',sans-serif;color:#000">0.0</div>
<div class="t" style="right:226.20000000000005px;text-align:right;top:94.69px;font-size:11px;font-family:'Liberation Sans',sans-serif;letter-spacing:-0.3px;color:#000">Center Y</div>
<div class="a" style="left:996px;top:89.5px;width:58px;height:19.5px;border:1px solid #a0a4a8;background:#fff"></div>
<div class="t" style="left:998.5px;top:92.57px;font-size:11.5px;font-family:'Liberation Sans',sans-serif;letter-spacing:-0.2px;color:#000">-12.3</div>
<div class="a" style="left:1038px;top:91.5px;width:14px;height:16px;border:1px solid #b0b4b8;background:#f4f4f4"></div>
<div class="a" style="left:1039px;top:98.5px;width:12px;height:2px;background:#c8ccd0"></div>
<div class="a" style="left:1041.5px;top:93.5px;width:0;height:0;border-left:3.5px solid transparent;border-right:3.5px solid transparent;border-bottom:3.5px solid #5060a0"></div>
<div class="a" style="left:1041.5px;top:102px;width:0;height:0;border-left:3.5px solid transparent;border-right:3.5px solid transparent;border-top:3.5px solid #5060a0"></div>
<div class="a" style="left:1066px;top:92px;width:13px;height:13px;border:1px solid #8e8f8f;box-shadow:inset 0 0 0 1px #fff;background:linear-gradient(135deg,#d4d4d4,#f8f8f8)"></div>
<svg style="left:1066px;top:92px" width="13" height="13"><path d="M3.2,6.5 L5.8,9.5 L9.8,2.3" stroke="#34448c" stroke-width="2" fill="none"/></svg>
<div class="t" style="left:1085.3px;top:94.19px;font-size:11px;font-family:'Liberation Sans',sans-serif;color:#000">0.0</div>
<div class="t" style="right:226.20000000000005px;text-align:right;top:122.69px;font-size:11px;font-family:'Liberation Sans',sans-serif;letter-spacing:-0.3px;color:#000">Major axis (km)</div>
<div class="a" style="left:996px;top:117.5px;width:58px;height:19.5px;border:1px solid #a0a4a8;background:#fff"></div>
<div class="t" style="left:998.5px;top:120.57px;font-size:11.5px;font-family:'Liberation Sans',sans-serif;letter-spacing:-0.2px;color:#000">282.3</div>
<div class="a" style="left:1038px;top:119.5px;width:14px;height:16px;border:1px solid #b0b4b8;background:#f4f4f4"></div>
<div class="a" style="left:1039px;top:126.5px;width:12px;height:2px;background:#c8ccd0"></div>
<div class="a" style="left:1041.5px;top:121.5px;width:0;height:0;border-left:3.5px solid transparent;border-right:3.5px solid transparent;border-bottom:3.5px solid #5060a0"></div>
<div class="a" style="left:1041.5px;top:130px;width:0;height:0;border-left:3.5px solid transparent;border-right:3.5px solid transparent;border-top:3.5px solid #5060a0"></div>
<div class="a" style="left:1066px;top:120px;width:13px;height:13px;border:1px solid #8e8f8f;box-shadow:inset 0 0 0 1px #fff;background:linear-gradient(135deg,#d4d4d4,#f8f8f8)"></div>
<svg style="left:1066px;top:120px" width="13" height="13"><path d="M3.2,6.5 L5.8,9.5 L9.8,2.3" stroke="#34448c" stroke-width="2" fill="none"/></svg>
<div class="t" style="left:1085.3px;top:122.19px;font-size:11px;font-family:'Liberation Sans',sans-serif;color:#000">0.0</div>
<div class="t" style="right:226.20000000000005px;text-align:right;top:144.19px;font-size:11px;font-family:'Liberation Sans',sans-serif;letter-spacing:-0.3px;color:#000">Minor axis (km)</div>
<div class="a" style="left:996px;top:139.0px;width:58px;height:19.5px;border:1px solid #a0a4a8;background:#fff"></div>
<div class="t" style="left:998.5px;top:142.07px;font-size:11.5px;font-family:'Liberation Sans',sans-serif;letter-spacing:-0.2px;color:#000">154.6</div>
<div class="a" style="left:1038px;top:141.0px;width:14px;height:16px;border:1px solid #b0b4b8;background:#f4f4f4"></div>
<div class="a" style="left:1039px;top:148.0px;width:12px;height:2px;background:#c8ccd0"></div>
<div class="a" style="left:1041.5px;top:143.0px;width:0;height:0;border-left:3.5px solid transparent;border-right:3.5px solid transparent;border-bottom:3.5px solid #5060a0"></div>
<div class="a" style="left:1041.5px;top:151.5px;width:0;height:0;border-left:3.5px solid transparent;border-right:3.5px solid transparent;border-top:3.5px solid #5060a0"></div>
<div class="a" style="left:1066px;top:142px;width:13px;height:13px;border:1px solid #8e8f8f;box-shadow:inset 0 0 0 1px #fff;background:linear-gradient(135deg,#d4d4d4,#f8f8f8)"></div>
<svg style="left:1066px;top:142px" width="13" height="13"><path d="M3.2,6.5 L5.8,9.5 L9.8,2.3" stroke="#34448c" stroke-width="2" fill="none"/></svg>
<div class="t" style="left:1085.3px;top:143.69px;font-size:11px;font-family:'Liberation Sans',sans-serif;color:#000">0.0</div>
<div class="t" style="right:226.20000000000005px;text-align:right;top:166.19px;font-size:11px;font-family:'Liberation Sans',sans-serif;letter-spacing:-0.3px;color:#000">Orientation</div>
<div class="a" style="left:996px;top:161.0px;width:58px;height:19.5px;border:1px solid #a0a4a8;background:#fff"></div>
<div class="t" style="left:998.5px;top:164.07px;font-size:11.5px;font-family:'Liberation Sans',sans-serif;letter-spacing:-0.2px;color:#000">195.5</div>
<div class="a" style="left:1038px;top:163.0px;width:14px;height:16px;border:1px solid #b0b4b8;background:#f4f4f4"></div>
<div class="a" style="left:1039px;top:170.0px;width:12px;height:2px;background:#c8ccd0"></div>
<div class="a" style="left:1041.5px;top:165.0px;width:0;height:0;border-left:3.5px solid transparent;border-right:3.5px solid transparent;border-bottom:3.5px solid #5060a0"></div>
<div class="a" style="left:1041.5px;top:173.5px;width:0;height:0;border-left:3.5px solid transparent;border-right:3.5px solid transparent;border-top:3.5px solid #5060a0"></div>
<div class="a" style="left:1066px;top:164px;width:13px;height:13px;border:1px solid #8e8f8f;box-shadow:inset 0 0 0 1px #fff;background:linear-gradient(135deg,#d4d4d4,#f8f8f8)"></div>
<svg style="left:1066px;top:164px" width="13" height="13"><path d="M3.2,6.5 L5.8,9.5 L9.8,2.3" stroke="#34448c" stroke-width="2" fill="none"/></svg>
<div class="t" style="left:1085.3px;top:165.69px;font-size:11px;font-family:'Liberation Sans',sans-serif;color:#000">0.0</div>
<div class="t" style="left:862.5px;width:600px;text-align:center;top:66.69px;font-size:11px;font-family:'Liberation Sans',sans-serif;letter-spacing:-0.2px;color:#000">Centered on</div>
<div class="t" style="left:862.5px;width:600px;text-align:center;top:79.19px;font-size:11px;font-family:'Liberation Sans',sans-serif;letter-spacing:-0.1px;color:#000">Shape model</div>
<div class="a" style="left:1157px;top:94px;width:13px;height:13px;border:1px solid #8e8f8f;background:linear-gradient(135deg,#dcdcdc,#f8f8f8)"></div>
<div class="t" style="right:23.5px;text-align:right;top:127.19px;font-size:11px;font-family:'Liberation Sans',sans-serif;letter-spacing:-0.1px;color:#000">a/b=1.83</div>
<div class="t" style="right:22px;text-align:right;top:140.19px;font-size:11px;font-family:'Liberation Sans',sans-serif;letter-spacing:-0.2px;color:#000">dMag=-0.65</div>
<div class="t" style="left:1132.8px;top:155.69px;font-size:11px;font-family:'Liberation Sans',sans-serif;letter-spacing:-0.1px;color:#000">Motion</div>
<div class="t" style="left:1132px;top:169.69px;font-size:11px;font-family:'Liberation Sans',sans-serif;letter-spacing:-0.15px;color:#000">11.43km/s, X</div>
<div class="a" style="left:899.5px;top:192.5px;width:13px;height:13px;border:1px solid #8e8f8f;background:linear-gradient(135deg,#dcdcdc,#f8f8f8)"></div>
<div class="t" style="left:918.4px;top:193.19px;font-size:11px;font-family:'Liberation Sans',sans-serif;letter-spacing:-0.29px;color:#000">Circular</div>
<div class="a" style="left:970px;top:192.5px;width:13px;height:13px;border:1px solid #8e8f8f;background:linear-gradient(135deg,#dcdcdc,#f8f8f8)"></div>
<div class="t" style="left:989.3px;top:186.11px;font-size:10.5px;font-family:'Liberation Sans',sans-serif;letter-spacing:-0.1px;color:#000">Use assumed</div>
<div class="t" style="left:989.3px;top:199.11px;font-size:10.5px;font-family:'Liberation Sans',sans-serif;letter-spacing:-0.1px;color:#000">diameter</div>
<div class="a" style="left:1069px;top:192.5px;width:13px;height:13px;border:1px solid #8e8f8f;background:linear-gradient(135deg,#dcdcdc,#f8f8f8)"></div>
<div class="t" style="left:1087px;top:193.19px;font-size:11px;font-family:'Liberation Sans',sans-serif;letter-spacing:-0.17px;color:#000">Include Miss events</div>
<div class="a" style="left:919px;top:219px;width:248px;height:20px;border-top:2px solid #707070;border-left:2px solid #707070;border-right:1px solid #fff;border-bottom:1px solid #fff;background:#eeeeee"></div>
<div class="t" style="left:926.4px;top:224.69px;font-size:11px;font-family:'Liberation Sans',sans-serif;letter-spacing:-0.3px;color:#000">Show:</div>
<div class="a" style="left:961px;top:222.5px;width:13px;height:13px;border-radius:50%;border:1px solid #8e8f8f;background:radial-gradient(circle at 50% 50%,#e8e8e8,#f8f8f8)"><div class="a" style="left:2.5px;top:2.5px;width:6px;height:6px;border-radius:50%;background:radial-gradient(circle at 40% 40%,#40a0e0,#0a3a80)"></div></div>
<div class="t" style="left:979px;top:225.53px;font-size:10px;font-family:'Liberation Sans',sans-serif;color:#000">Both</div>
<div class="a" style="left:1019px;top:222.5px;width:13px;height:13px;border-radius:50%;border:1px solid #8e8f8f;background:radial-gradient(circle at 50% 50%,#e8e8e8,#f8f8f8)"></div>
<div class="t" style="left:1037.4px;top:225.53px;font-size:10px;font-family:'Liberation Sans',sans-serif;letter-spacing:-0.1px;color:#000">Primary</div>
<div class="a" style="left:1090px;top:222.5px;width:13px;height:13px;border-radius:50%;border:1px solid #8e8f8f;background:radial-gradient(circle at 50% 50%,#e8e8e8,#f8f8f8)"></div>
<div class="t" style="left:1108px;top:225.53px;font-size:10px;font-family:'Liberation Sans',sans-serif;letter-spacing:-0.4px;color:#000">Secondary</div>
<div class="a" style="left:919px;top:250px;width:248px;height:22px;border-top:2px solid #707070;border-left:2px solid #707070;border-right:1px solid #fff;border-bottom:1px solid #fff;background:#f0fcf0"></div>
<div class="t" style="left:927.8px;top:255.84px;font-size:12px;font-family:'Liberation Sans',sans-serif;letter-spacing:-0.1px;color:#780830;font-weight:bold">Plot scale</div>
<div class="a" style="left:996px;top:254.5px;width:13px;height:13px;border-radius:50%;border:1px solid #8e8f8f;background:radial-gradient(circle at 50% 50%,#e8e8e8,#f8f8f8)"><div class="a" style="left:2.5px;top:2.5px;width:6px;height:6px;border-radius:50%;background:radial-gradient(circle at 40% 40%,#40a0e0,#0a3a80)"></div></div>
<div class="t" style="left:1014.7px;top:256.27px;font-size:11.5px;font-family:'Liberation Sans',sans-serif;letter-spacing:-0.2px;color:#780830;font-weight:bold">normal</div>
<div class="a" style="left:1068px;top:254.5px;width:13px;height:13px;border-radius:50%;border:1px solid #8e8f8f;background:radial-gradient(circle at 50% 50%,#e8e8e8,#f8f8f8)"></div>
<div class="t" style="left:1086px;top:255.84px;font-size:12px;font-family:'Liberation Sans',sans-serif;color:#780830;font-weight:bold">x 2</div>
<div class="a" style="left:1120.5px;top:254.5px;width:13px;height:13px;border-radius:50%;border:1px solid #8e8f8f;background:radial-gradient(circle at 50% 50%,#e8e8e8,#f8f8f8)"></div>
<div class="t" style="left:1137.7px;top:255.84px;font-size:12px;font-family:'Liberation Sans',sans-serif;color:#780830;font-weight:bold">x 5</div>
<div class="t" style="left:893.8px;top:283.34px;font-size:12px;font-family:'Liberation Sans',sans-serif;letter-spacing:-0.1px;color:#780830;font-weight:bold">Plot scale</div>
<div class="a" style="left:954px;top:279px;width:240px;height:22px;background:#f6efef"></div>
<div class="a" style="left:960px;top:285px;width:229px;height:3px;background:#e8e8e8;border:1px solid #b0b0b0"></div>
<div class="a" style="left:960px;top:295px;width:240px;height:5px"><div class="a" style="left:0.0px;top:0;width:1px;height:4px;background:#a0a0a0"></div><div class="a" style="left:11.9px;top:0;width:1px;height:4px;background:#a0a0a0"></div><div class="a" style="left:23.8px;top:0;width:1px;height:4px;background:#a0a0a0"></div><div class="a" style="left:35.7px;top:0;width:1px;height:4px;background:#a0a0a0"></div><div class="a" style="left:47.6px;top:0;width:1px;height:4px;background:#a0a0a0"></div><div class="a" style="left:59.5px;top:0;width:1px;height:4px;background:#a0a0a0"></div><div class="a" style="left:71.4px;top:0;width:1px;height:4px;background:#a0a0a0"></div><div class="a" style="left:83.3px;top:0;width:1px;height:4px;background:#a0a0a0"></div><div class="a" style="left:95.2px;top:0;width:1px;height:4px;background:#a0a0a0"></div><div class="a" style="left:107.10000000000001px;top:0;width:1px;height:4px;background:#a0a0a0"></div><div class="a" style="left:119.0px;top:0;width:1px;height:4px;background:#a0a0a0"></div><div class="a" style="left:130.9px;top:0;width:1px;height:4px;background:#a0a0a0"></div><div class="a" style="left:142.8px;top:0;width:1px;height:4px;background:#a0a0a0"></div><div class="a" style="left:154.70000000000002px;top:0;width:1px;height:4px;background:#a0a0a0"></div><div class="a" style="left:166.6px;top:0;width:1px;height:4px;background:#a0a0a0"></div><div class="a" style="left:178.5px;top:0;width:1px;height:4px;background:#a0a0a0"></div><div class="a" style="left:190.4px;top:0;width:1px;height:4px;background:#a0a0a0"></div><div class="a" style="left:202.3px;top:0;width:1px;height:4px;background:#a0a0a0"></div><div class="a" style="left:214.20000000000002px;top:0;width:1px;height:4px;background:#a0a0a0"></div><div class="a" style="left:226.1px;top:0;width:1px;height:4px;background:#a0a0a0"></div></div>
<div class="a" style="left:1052px;top:281px;width:8px;height:12px;border:1px solid #8a8a8a;border-radius:1px 1px 4px 4px;background:#f0f0f0"></div>
<div class="t" style="left:892.5px;top:310.19px;font-size:11px;font-family:'Liberation Sans',sans-serif;letter-spacing:-0.23px;color:#000">Quality of the fit</div>
<div class="a" style="left:982.5px;top:305px;width:189px;height:20px;background:#fff;border:1px solid #e4e4e4"></div>
<div class="a" style="left:985px;top:308px;width:167px;height:14.5px;background:#ff8050"></div>
<div class="t" style="left:985.3px;top:309.69px;font-size:11px;font-family:'Liberation Sans',sans-serif;letter-spacing:-0.26px;color:#000">No reliable position or size</div>
<div class="a" style="left:1160px;top:313px;width:0;height:0;border-left:4px solid transparent;border-right:4px solid transparent;border-top:5px solid #000"></div>
<div class="a" style="left:891.7px;top:332px;width:126.5px;height:16.5px;background:#acd8e8"></div>
<div class="a" style="left:893.5px;top:334px;width:13px;height:13px;border:1px solid #8e8f8f;background:linear-gradient(135deg,#dcdcdc,#f8f8f8)"></div>
<div class="t" style="left:913px;top:334.69px;font-size:11px;font-family:'Liberation Sans',sans-serif;letter-spacing:-0.25px;color:#000;font-style:italic">Flag for future review</div>
<div class="t" style="left:893px;top:355.19px;font-size:11px;font-family:'Liberation Sans',sans-serif;letter-spacing:-0.35px;color:#000">Form opacity</div>
<div class="a" style="left:966px;top:356px;width:66px;height:3px;background:#e8e8e8;border:1px solid #b8b8b8"></div>
<div class="a" style="left:971px;top:366px;width:70px;height:4px"><div class="a" style="left:0.0px;top:0;width:1px;height:3px;background:#b0b0b0"></div><div class="a" style="left:11.9px;top:0;width:1px;height:3px;background:#b0b0b0"></div><div class="a" style="left:23.8px;top:0;width:1px;height:3px;background:#b0b0b0"></div><div class="a" style="left:35.7px;top:0;width:1px;height:3px;background:#b0b0b0"></div><div class="a" style="left:47.6px;top:0;width:1px;height:3px;background:#b0b0b0"></div><div class="a" style="left:59.5px;top:0;width:1px;height:3px;background:#b0b0b0"></div></div>
<div class="a" style="left:1026px;top:350px;width:9px;height:14px;border:1px solid #8a8a8a;border-radius:2px 2px 4px 4px;background:#f0f0f0"></div>
<div class="t" style="left:902.32px;top:382.69px;font-size:11px;font-family:'Liberation Sans',sans-serif;transform:scaleX(0.9779);transform-origin:0 0;color:#000">RMS fit 0.0 ±0.6 km</div>
<div class="a" style="left:895.5px;top:402px;width:300px;height:492px;border-left:2px solid #606060;border-top:2px solid #606060;background:#fff"></div>
<div class="a" style="left:902.5px;top:408.2px;width:65px;height:3px;background:#10e8f0"></div>
<div class="t" style="left:992px;top:405.06px;font-size:13.4px;font-family:'Liberation Mono',monospace;letter-spacing:0px;color:#000">1    S Messner, near Vale</div>
<div class="a" style="left:902.5px;top:420.2px;width:65px;height:3px;background:#ff1010"></div>
<div class="t" style="left:992px;top:417.06px;font-size:13.4px;font-family:'Liberation Mono',monospace;letter-spacing:0px;color:#000">2    R Nolthenius, near B</div>
<div class="a" style="left:902.5px;top:432.2px;width:65px;height:3px;background:#80f0d0"></div>
<div class="t" style="left:992px;top:429.06px;font-size:13.4px;font-family:'Liberation Mono',monospace;letter-spacing:0px;color:#000">3    K Bender, near Santa</div>
<div class="a" style="left:902.5px;top:444.2px;width:65px;height:3px;background:#9028e0"></div>
<div class="t" style="left:992px;top:441.06px;font-size:13.4px;font-family:'Liberation Mono',monospace;letter-spacing:0px;color:#000">4    D Breit, near Morgan</div>
<div class="a" style="left:902.5px;top:456.2px;width:65px;height:3px;background:#902828"></div>
<div class="t" style="left:992px;top:453.06px;font-size:13.4px;font-family:'Liberation Mono',monospace;letter-spacing:0px;color:#000">5(P) Predicted</div>
<div class="a" style="left:1195px;top:402px;width:6px;height:492px;background:#f1f1f1"></div>
<div class="a" style="left:897.5px;top:877px;width:297px;height:16.5px;background:#ececec"></div>
<div class="a" style="left:903px;top:881px;width:0;height:0;border-top:4px solid transparent;border-bottom:4px solid transparent;border-right:4px solid #505050"></div>
<div class="a" style="left:1185px;top:881px;width:0;height:0;border-top:4px solid transparent;border-bottom:4px solid transparent;border-left:4px solid #505050"></div>
<div class="a" style="left:915px;top:877.5px;width:199px;height:15px;border:1px solid #9a9a9a;border-radius:2px;background:linear-gradient(180deg,#f0f0f0,#d8d8d8)"></div>
<div class="a" style="left:1010px;top:881px;width:1px;height:8px;background:#404040"></div>
<div class="a" style="left:1013px;top:881px;width:1px;height:8px;background:#404040"></div>
<div class="a" style="left:1016px;top:881px;width:1px;height:8px;background:#404040"></div>
</body></html>
